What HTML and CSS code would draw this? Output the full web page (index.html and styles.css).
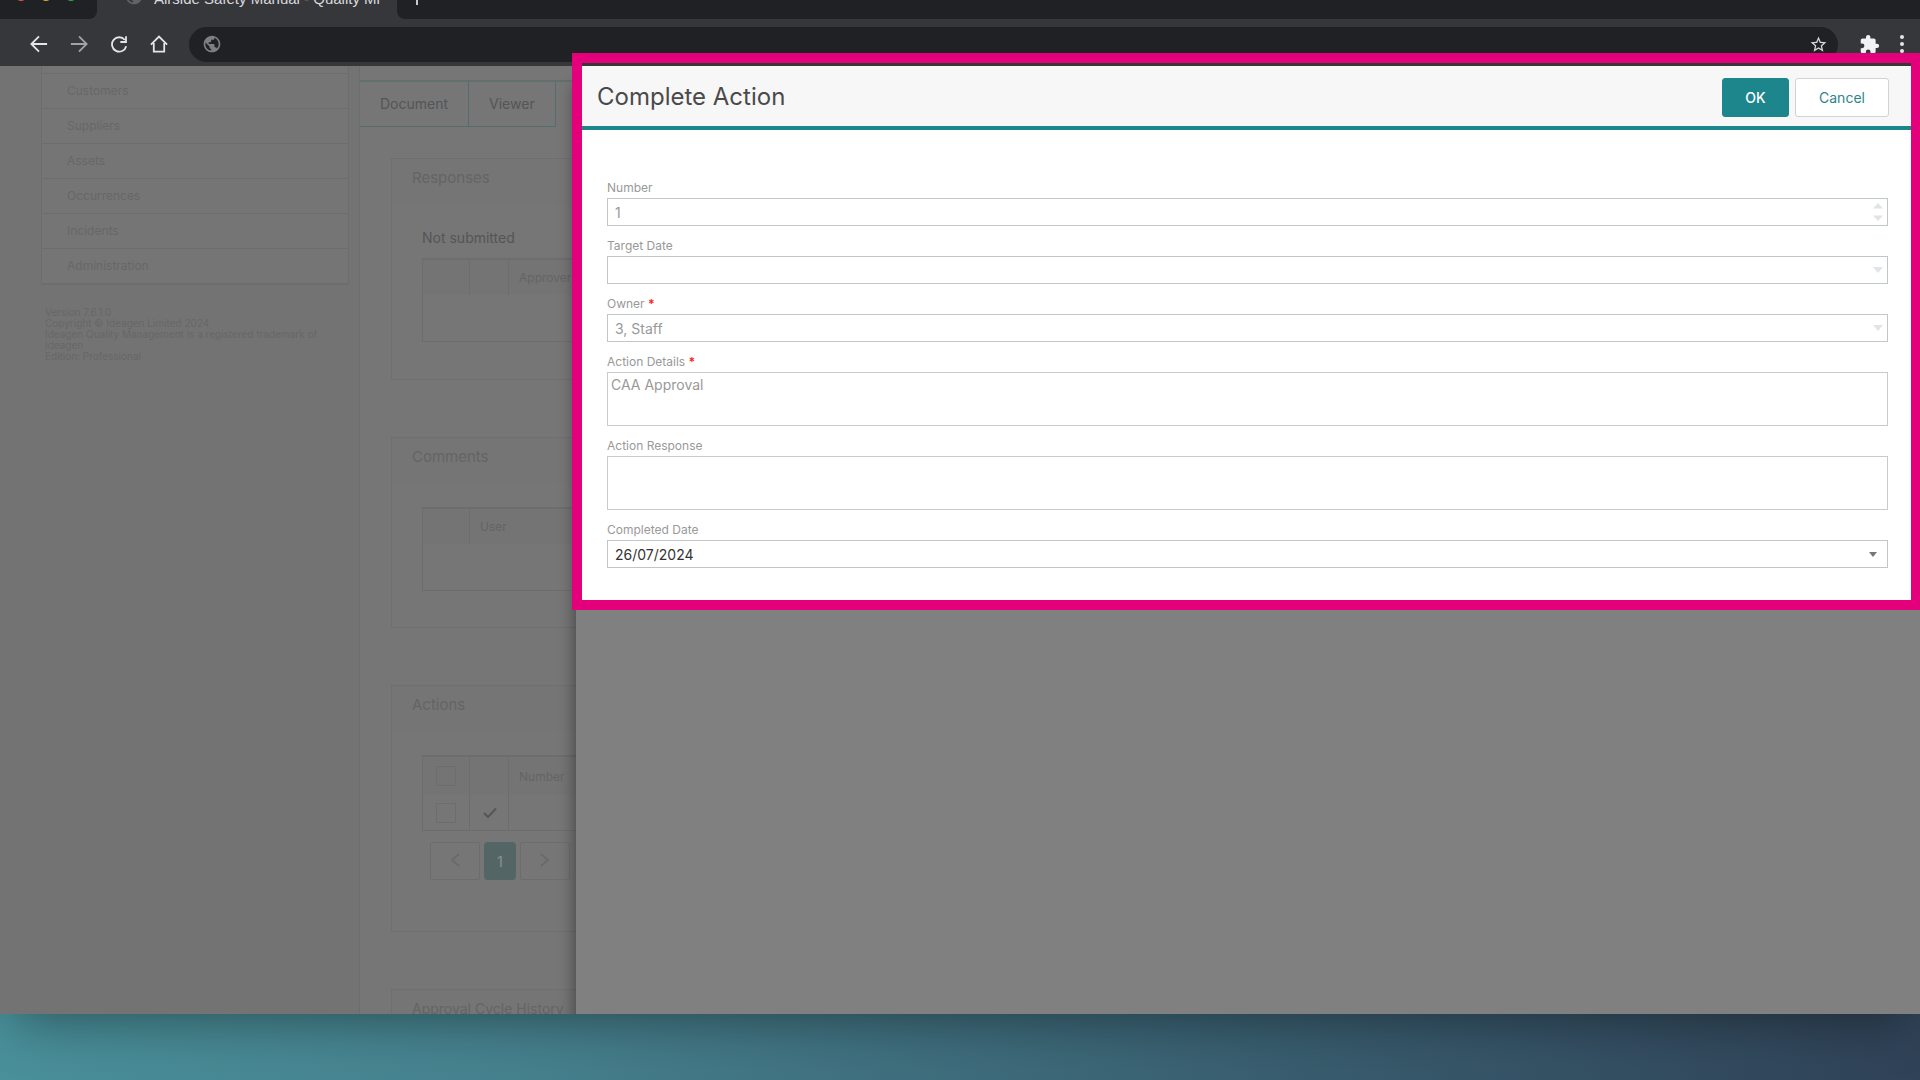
FILE: index.html
```html
<!DOCTYPE html>
<html lang="en">
<head>
<meta charset="utf-8">
<title>Airside Safety Manual - Quality Management</title>
<link rel="stylesheet" href="styles.css">
</head>
<body>
<svg class="defs" aria-hidden="true">
  <symbol id="globe" viewBox="0 0 24 24"><path fill="currentColor" d="M12 2C6.48 2 2 6.48 2 12s4.480 10 10 10 10-4.480 10-10S17.520 2 12 2zm-1 17.930c-3.950-.49-7-3.850-7-7.930 0-.62.080-1.210.21-1.790L9 15v1c0 1.100.9 2 2 2v1.930zm6.900-2.540c-.26-.81-1-1.390-1.900-1.390h-1v-3c0-.55-.45-1-1-1H8v-2h2c.55 0 1-.45 1-1V7h2c1.100 0 2-.9 2-2v-.41c2.930 1.190 5 4.060 5 7.410 0 2.080-.8 3.970-2.100 5.390z"/></symbol>
</svg>
<div class="browser">
  <div class="tabstrip">
    <div class="lights"><i class="red"></i><i class="amber"></i><i class="green"></i></div>
    <div class="tab"><svg class="tab-icon"><use href="#globe"/></svg><span class="tab-title">Airside Safety Manual - Quality Mi</span></div>
    <div class="strip-rest"><svg width="14" height="14" viewBox="0 0 14 14"><path d="M7 1v12M1 7h12" stroke="#c8c9cb" stroke-width="2"/></svg></div>
  </div>
  <div class="toolbar">
    <button class="tool" aria-label="Back"><svg viewBox="0 0 20 20"><path d="M19 10H2M10 1.500L1.500 10l8.500 8.500"/></svg></button>
    <button class="tool dim" aria-label="Forward"><svg viewBox="0 0 20 20"><path d="M1 10h17M10 1.500l8.500 8.500-8.500 8.500"/></svg></button>
    <button class="tool" aria-label="Reload"><svg viewBox="0 0 20 20"><path d="M16.500 5.500A8 8 0 1 0 18 12.500M17.800 1.500v6.300h-6.300"/></svg></button>
    <button class="tool" aria-label="Home"><svg viewBox="0 0 20 20"><path d="M1 10.800L10 1.800l9 9M4.200 9v9.500h11.600V9"/></svg></button>
    <div class="omnibox">
      <svg class="site-icon"><use href="#globe"/></svg>
      <input class="address" type="text" aria-label="Address">
      <svg class="star" viewBox="0 0 24 24"><path fill="currentColor" d="M22 9.240l-7.190-.62L12 2 9.190 8.630 2 9.240l5.460 4.730L5.820 21 12 17.270 18.180 21l-1.630-7.030L22 9.240zM12 15.400l-3.760 2.270 1-4.280-3.320-2.880 4.380-.38L12 6.100l1.710 4.040 4.380.38-3.320 2.880 1 4.280L12 15.400z"/></svg>
    </div>
    <svg class="puzzle" viewBox="0 0 24 24"><path fill="currentColor" d="M20.500 11H19V7c0-1.100-.9-2-2-2h-4V3.500a2.500 2.500 0 0 0-5 0V5H4c-1.100 0-2 .9-2 2v3.800h1.500a2.700 2.700 0 0 1 0 5.400H2V20c0 1.100.9 2 2 2h3.800v-1.500a2.700 2.700 0 0 1 5.400 0V22H17c1.100 0 2-.9 2-2v-4h1.500a2.500 2.500 0 0 0 0-5z"/></svg>
    <svg class="dots" viewBox="0 0 6 20"><circle cx="3" cy="3" r="2"/><circle cx="3" cy="10" r="2"/><circle cx="3" cy="17" r="2"/></svg>
  </div>
  <div class="page">
    <nav class="sidebar">
      <ul class="menu">
        <li class="menu-cut"></li>
        <li><a href="#customers">Customers</a></li>
        <li><a href="#suppliers">Suppliers</a></li>
        <li><a href="#assets">Assets</a></li>
        <li><a href="#occurrences">Occurrences</a></li>
        <li><a href="#incidents">Incidents</a></li>
        <li><a href="#administration">Administration</a></li>
      </ul>
      <p class="version">Version 7.6.1.0<br>Copyright © Ideagen Limited 2024<br>Ideagen Quality Management is a registered trademark of Ideagen<br>Edition: Professional</p>
    </nav>
    <main class="main">
      <div class="doc-tabs"><a href="#document">Document</a><a href="#viewer">Viewer</a></div>
      <section class="card responses">
        <h2>Responses</h2>
        <h3>Not submitted</h3>
        <table class="grid">
          <thead><tr><th class="c-sel"></th><th class="c-state"></th><th>Approver</th></tr></thead>
          <tbody><tr><td colspan="3"></td></tr></tbody>
        </table>
      </section>
      <section class="card comments">
        <h2>Comments</h2>
        <table class="grid">
          <thead><tr><th class="c-sel"></th><th>User</th></tr></thead>
          <tbody><tr><td colspan="2"></td></tr></tbody>
        </table>
      </section>
      <section class="card actions">
        <h2>Actions</h2>
        <table class="grid lined">
          <thead><tr><th class="c-sel"><input type="checkbox" aria-label="Select all"></th><th class="c-state"></th><th>Number</th></tr></thead>
          <tbody><tr><td><input type="checkbox" aria-label="Select action"></td><td><svg class="tick" viewBox="0 0 14 12"><path d="M1 6l4 4 8-8.500"/></svg></td><td></td></tr></tbody>
        </table>
        <div class="pager">
          <button aria-label="Previous page"><svg viewBox="0 0 10 14"><path d="M9 1L2 7l7 6"/></svg></button>
          <button class="current">1</button>
          <button aria-label="Next page"><svg viewBox="0 0 10 14"><path d="M1 1l7 6-7 6"/></svg></button>
        </div>
      </section>
      <section class="card history"><h2>Approval Cycle History</h2></section>
    </main>
    <div class="drawer">
      <form class="panel">
        <header class="panel-head">
          <h1>Complete Action</h1>
          <button class="btn primary" type="button">OK</button>
          <button class="btn" type="button">Cancel</button>
        </header>
        <div class="fields">
          <div class="field">
            <label for="number">Number</label>
            <div class="box off"><input id="number" type="number" value="1" disabled>
              <svg class="spin" viewBox="0 0 10 18"><path d="M0 5.500L5 0l5 5.500zM0 12.500h10L5 18z"/></svg></div>
          </div>
          <div class="field">
            <label for="target">Target Date</label>
            <div class="box off"><input id="target" type="text" disabled>
              <svg class="caret" viewBox="0 0 10 6"><path d="M0 0h10L5 6z"/></svg></div>
          </div>
          <div class="field">
            <label for="owner">Owner <b>*</b></label>
            <div class="box off"><select id="owner" disabled><option>3, Staff</option></select>
              <svg class="caret" viewBox="0 0 10 6"><path d="M0 0h10L5 6z"/></svg></div>
          </div>
          <div class="field">
            <label for="details">Action Details <b>*</b></label>
            <textarea id="details" disabled>CAA Approval</textarea>
          </div>
          <div class="field">
            <label for="response">Action Response</label>
            <textarea id="response"></textarea>
          </div>
          <div class="field">
            <label for="completed">Completed Date</label>
            <div class="box live"><input id="completed" type="text" value="26/07/2024">
              <svg class="caret" viewBox="0 0 10 6"><path d="M0 0h10L5 6z"/></svg></div>
          </div>
        </div>
      </form>
    </div>
  </div>
</div>
</body>
</html>
```
FILE: styles.css
```css
* { box-sizing: border-box; }

body {
  margin: 0;
  height: 100vh;
  padding-bottom: 66px;
  overflow: hidden;
  font-family: Inter, "Liberation Sans", sans-serif;
  background: linear-gradient(100deg, #4a959e 0%, #46818e 33%, #3a6172 66%, #304257 100%);
}

h1, h2, h3, p, ul { margin: 0; padding: 0; font-weight: 400; }
ul { list-style: none; }
a { color: inherit; text-decoration: none; }
button, input, select, textarea { font-family: inherit; }
.defs { display: none; }

.browser {
  height: 100%;
  display: flex;
  flex-direction: column;
  box-shadow: 0 20px 50px -14px rgba(0, 0, 0, 0.4);
}

/* Browser chrome */
.tabstrip {
  flex: none;
  display: flex;
  align-items: flex-end;
  height: 19px;
  overflow: hidden;
  background: #36373b;
}
.lights, .tab, .strip-rest { display: flex; align-items: center; height: 40px; }
.lights {
  width: 97px;
  padding: 0 0 8px 15px;
  gap: 13px;
  background: #202124;
  border-bottom-right-radius: 8px;
}
.lights i { width: 12px; height: 12px; border-radius: 50%; }
.red { background: #ed4f47; }
.amber { background: #e5a82b; }
.green { background: #27b33d; }
.tab { width: 300px; padding: 0 17px 0 27px; gap: 10px; }
.tab-icon { flex: none; width: 20px; height: 20px; color: #606367; margin-bottom: 6px; }
.tab-title {
  font: 15px/20px "Liberation Sans", sans-serif;
  color: #d8d9db;
  white-space: nowrap;
  overflow: hidden;
}
.strip-rest {
  flex: 1;
  padding-left: 13px;
  background: #202124;
  border-bottom-left-radius: 8px;
}

.toolbar {
  flex: none;
  display: flex;
  align-items: center;
  height: 47px;
  padding: 3px 15px 0 29px;
  background: #36373b;
}
.tool {
  width: 20px;
  height: 20px;
  margin-right: 20px;
  padding: 1px;
  border: 0;
  background: none;
  color: #e4e5e6;
}
.tool svg { display: block; width: 18px; height: 18px; fill: none; stroke: currentColor; stroke-width: 2; }
.tool.dim { color: #a2a3a6; }
.omnibox {
  flex: 1;
  display: flex;
  align-items: center;
  height: 35px;
  margin-right: 21px;
  padding: 0 10px 0 13px;
  border-radius: 18px;
  background: #202124;
}
.site-icon { width: 20px; height: 20px; color: #7c7f83; }
.address { flex: 1; border: 0; background: none; color: #e4e5e6; outline: 0; }
.star { width: 19px; height: 19px; color: #d6d7d9; }
.puzzle { width: 21px; height: 21px; color: #f1f2f3; margin-right: 19px; }
.dots { width: 6px; height: 20px; fill: #e4e5e6; }

/* Dimmed application page */
.page {
  flex: 1;
  min-height: 0;
  display: grid;
  grid-template-columns: 359px 217px minmax(0, 1fr);
  background: #767676;
}
.sidebar {
  padding: 0 10px 0 41px;
  overflow: hidden;
  background: #737373;
  color: #676767;
}
.menu {
  border: 1px solid #6b6e6f;
  border-top: 0;
  border-bottom-width: 2px;
  background: #757575;
  font-size: 12px;
}
.menu li + li { border-top: 1px solid #6b6e6f; }
.menu-cut { height: 7px; }
.menu a { display: block; padding: 0 25px; line-height: 34px; }
.version { padding: 22px 20px 0 4px; font-size: 10px; line-height: 11px; }

.main {
  min-height: 0;
  overflow: hidden;
  border-left: 1px solid #6b6e6f;
  color: #646464;
  white-space: nowrap;
}
.doc-tabs {
  display: flex;
  height: 47px;
  margin-top: 14px;
  border-top: 2px solid #61706f;
  font-size: 14px;
  line-height: 44px;
  color: #535556;
}
.doc-tabs a { padding: 0 20px; border: 1px solid #546c6c; border-width: 0 1px 1px 0; }
.card {
  width: 300px;
  margin-left: 31px;
  border: 1px solid #6d6f70;
}
.card h2 {
  height: 46px;
  padding-left: 20px;
  font-size: 15px;
  line-height: 38px;
  background: #757575;
}
.card h3 { padding: 23px 0 10px 30px; font-size: 14px; line-height: 20px; color: #545556; }
.responses { height: 222px; margin-top: 31px; }
.comments { height: 191px; margin-top: 57px; }
.actions { height: 247px; margin-top: 57px; }
.history { height: 100px; margin-top: 57px; }
.history h2 { font-size: 14px; }
.grid {
  width: 260px;
  margin-left: 30px;
  border: 1px solid #6b6d6e;
  border-top-width: 2px;
  border-spacing: 0;
  font-size: 12px;
}
.card h2 + .grid { margin-top: 23px; }
.grid th {
  height: 35px;
  padding: 0 0 0 10px;
  border-left: 1px solid #6b6d6e;
  background: #747474;
  font-weight: 400;
  text-align: left;
}
.grid td { height: 46px; padding: 0 0 0 10px; border-left: 1px solid #6b6d6e; }
.grid tr > :first-child { border-left: 0; }
.grid .c-sel { width: 46px; }
.grid .c-state { width: 39px; }
.lined th { height: 38px; }
.lined td { height: 35px; }
.lined th:first-child, .lined td:first-child { padding: 0 0 0 13px; }
.grid input {
  appearance: none;
  display: block;
  width: 20px;
  height: 20px;
  margin: 0;
  border: 1px solid #6b6d6e;
}
.tick { display: block; width: 16px; height: 12px; margin-left: 2px; fill: none; stroke: #555657; stroke-width: 2; }
.pager { display: flex; gap: 4px; padding: 11px 0 0 38px; }
.pager button {
  flex: none;
  width: 50px;
  height: 38px;
  padding: 0;
  border: 1px solid #6b6d6e;
  border-radius: 2px;
  background: none;
}
.pager svg { width: 10px; height: 14px; fill: none; stroke: #6a6a6a; stroke-width: 2; }
.pager .current {
  width: 32px;
  border: 0;
  border-radius: 4px;
  background: #536565;
  color: #858b8b;
  font-size: 14px;
  font-weight: 500;
}

/* Side drawer with the action form */
.drawer {
  position: relative;
  background: #808080;
  box-shadow: -2px 20px 14px rgba(0, 0, 0, 0.4);
  clip-path: inset(-13px 0 0 -24px);
}
.panel { position: relative; background: #fff; }
.panel::after {
  content: "";
  position: absolute;
  inset: -13px 0 -10px -4px;
  border: 10px solid #e4007a;
  border-right-width: 9px;
  pointer-events: none;
}
.panel-head {
  display: flex;
  align-items: center;
  gap: 6px;
  height: 64px;
  padding: 2px 31px 0 21px;
  border-bottom: 4px solid #1c868c;
  background: #f7f7f7;
}
.panel-head h1 { flex: 1; font-size: 24px; line-height: 32px; color: #4a4a4a; }
.btn {
  width: 94px;
  height: 39px;
  padding: 0;
  border: 1px solid #d3d3d3;
  border-radius: 3px;
  background: #fff;
  color: #2f8489;
  font-size: 14px;
}
.btn.primary { width: 67px; border-color: #1c868c; background: #1c868c; color: #fff; font-weight: 500; }

.fields {
  display: flex;
  flex-direction: column;
  gap: 10px;
  padding: 48px 32px 32px 31px;
}
.field { display: flex; flex-direction: column; color: #999; }
.field label { font-size: 12px; line-height: 20px; }
.field b { color: #f22; font-weight: 700; }
.box { display: flex; align-items: center; height: 28px; padding-right: 4px; border: 1px solid #c0c7cb; }
.box input, .box select {
  flex: 1;
  appearance: none;
  height: 26px;
  padding: 0 7px;
  border: 0;
  outline: 0;
  background: none;
  color: #999;
  font-size: 14px;
  opacity: 1;
}
.box input[type="number"] { appearance: textfield; }
.box.live input { color: #333; }
.spin { width: 10px; height: 18px; fill: #e4e4e4; }
.caret { width: 10px; height: 6px; fill: #e4e4e4; }
.live { padding-right: 10px; }
.live .caret { width: 8px; height: 5px; fill: #777; }
.field textarea {
  display: block;
  height: 54px;
  padding: 2px 3px;
  border: 1px solid #c8cbcd;
  outline: 0;
  resize: none;
  background: #fff;
  color: #999;
  font-size: 14px;
  line-height: 20px;
}
```
